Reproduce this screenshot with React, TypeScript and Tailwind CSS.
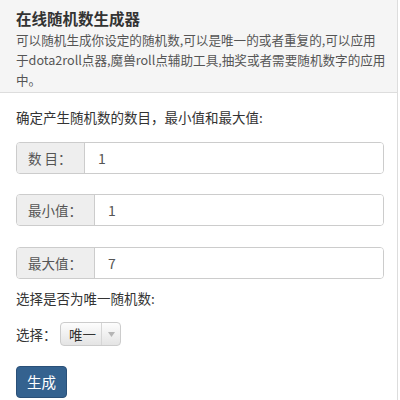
const font = { fontFamily: '"Noto Sans CJK SC", "Noto Sans", sans-serif' };

function InputGroup({ label, value, addonWidth }: { label: string; value: string; addonWidth: string }) {
  return (
    <div className="flex h-[32px] w-[368px] rounded-[4px] border border-[#cccccc] bg-white overflow-hidden">
      <span
        className={`flex items-center ${addonWidth} shrink-0 border-r border-[#cccccc] bg-[#eeeeee] pl-[11px] text-[13.5px] text-[#555555]`}
      >
        {label}
      </span>
      <input
        readOnly
        value={value}
        className="flex-1 px-[13px] text-[14px] text-[#555555] outline-none bg-white"
        style={font}
      />
    </div>
  );
}

export default function App() {
  return (
    <div className="w-[400px] h-[400px] bg-white overflow-hidden text-[#333333]" style={font}>
      <div className="w-[398px] h-full border-r border-[#dddddd]">
        {/* Header */}
        <div className="bg-[#f5f5f5] border-b border-[#dddddd] pl-[16px] pr-[4px] pt-[7px] pb-[2px]">
          <h1 className="text-[15.5px] font-bold leading-[22px] text-[#333333]">在线随机数生成器</h1>
          <p className="mt-[1px] text-[12.6px] leading-[20px] text-[#555555] whitespace-nowrap">
            可以随机生成你设定的随机数,可以是唯一的或者重复的,可以应用
            <br />
            于dota2roll点器,魔兽roll点辅助工具,抽奖或者需要随机数字的应用
            <br />
            中。
          </p>
        </div>

        {/* Body */}
        <div className="pl-[16px] pt-[14px]">
          <p className="text-[13.5px] leading-[20px]">确定产生随机数的数目，最小值和最大值:</p>

          <div className="mt-[15px]">
            <InputGroup label="数 目：" value="1" addonWidth="w-[68px]" />
          </div>
          <div className="mt-[20px]">
            <InputGroup label="最小值：" value="1" addonWidth="w-[78px]" />
          </div>
          <div className="mt-[21px]">
            <InputGroup label="最大值：" value="7" addonWidth="w-[78px]" />
          </div>

          <p className="mt-[9px] text-[13.5px] leading-[20px]">选择是否为唯一随机数:</p>

          <div className="mt-[14px] flex items-center h-[24px]">
            <span className="text-[13.5px] w-[44px]">选择：</span>
            <div className="flex h-[24px] w-[61px] rounded-[4px] border border-[#cccccc] bg-gradient-to-b from-[#fdfdfd] to-[#e4e4e4] overflow-hidden">
              <span className="flex items-center pl-[8px] w-[40px] text-[13.5px] text-[#333333]">唯一</span>
              <span className="flex flex-1 items-center justify-center border-l border-[#d6d6d6]">
                <svg width="7" height="5" viewBox="0 0 7 5">
                  <path d="M0 0 L7 0 L3.5 5 Z" fill="#b5b5b5" />
                </svg>
              </span>
            </div>
          </div>

          <button className="mt-[20px] h-[32px] w-[51px] rounded-[4px] border border-[#2a5078] bg-[#34628f] text-[14.5px] text-white">
            生成
          </button>
        </div>
      </div>
    </div>
  );
}
